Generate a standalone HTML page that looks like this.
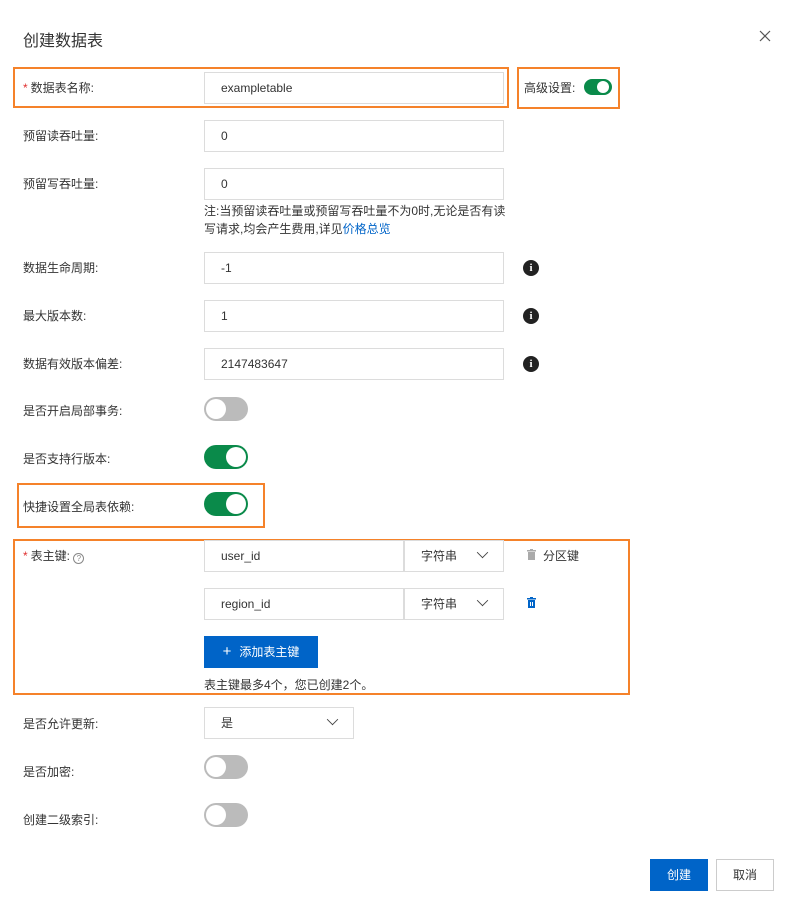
<!DOCTYPE html>
<html><head><meta charset="utf-8"><style>
*{box-sizing:border-box;margin:0;padding:0}
body{width:798px;height:914px;background:#fff;font-family:"Liberation Sans","Noto Sans CJK SC",sans-serif;color:#333;font-size:12px;position:relative;overflow:hidden}
.a{position:absolute}
.lbl{position:absolute;left:23px;font-size:12px;color:#333;line-height:16px}
.inp{position:absolute;left:204px;width:300px;height:32px;border:1px solid #dcdcdc;padding-left:16px;line-height:30px;font-size:12px;color:#333}
.tg{position:absolute;left:204px;width:44px;height:24px;border-radius:12px;background:#bbb}
.tg::after{content:"";position:absolute;top:2px;left:2px;width:20px;height:20px;border-radius:50%;background:#fff}
.tg.on{background:#0a8a4a}
.tg.on::after{left:22px}
.ob{position:absolute;border:2px solid #f5822a}
.info{position:absolute;left:523px;width:16px;height:16px;border-radius:50%;background:#222;color:#fff;font-size:11px;font-weight:bold;text-align:center;line-height:16px;font-family:"Liberation Serif",serif}
.sel{position:absolute;left:404px;width:100px;height:32px;border:1px solid #dcdcdc;padding-left:16px;line-height:30px}
.chev{position:absolute;right:16px;width:9px;height:9px;border-right:1.5px solid #444;border-bottom:1.5px solid #444;transform:rotate(45deg) scale(.9);top:7px}
.star{color:#e03030;margin-right:3px}
</style></head><body>
<div class="a" style="left:23px;top:27px;font-size:16px;color:#333">创建数据表</div>
<svg class="a" style="left:759px;top:30px" width="12" height="12"><path d="M1 1L11 11M11 1L1 11" stroke="#555" stroke-width="1.2"/></svg>

<div class="ob" style="left:13px;top:67px;width:496px;height:41px"></div>
<div class="lbl" style="top:80px"><span class="star">*</span>数据表名称:</div>
<div class="inp" style="top:72px">exampletable</div>
<div class="ob" style="left:517px;top:67px;width:103px;height:42px"></div>
<div class="a" style="left:524px;top:79px">高级设置:</div>
<div class="a" style="left:584px;top:79px;width:28px;height:16px;border-radius:8px;background:#0a8a4a"><div class="a" style="left:13px;top:2px;width:12px;height:12px;border-radius:50%;background:#fff"></div></div>

<div class="lbl" style="top:128px">预留读吞吐量:</div>
<div class="inp" style="top:120px">0</div>
<div class="lbl" style="top:176px">预留写吞吐量:</div>
<div class="inp" style="top:168px">0</div>
<div class="a" style="left:204px;top:202px;width:305px;line-height:18px">注:当预留读吞吐量或预留写吞吐量不为0时,无论是否有读写请求,均会产生费用,详见<span style="color:#0064c8">价格总览</span></div>

<div class="lbl" style="top:260px">数据生命周期:</div>
<div class="inp" style="top:252px">-1</div><div class="info" style="top:260px">i</div>
<div class="lbl" style="top:308px">最大版本数:</div>
<div class="inp" style="top:300px">1</div><div class="info" style="top:308px">i</div>
<div class="lbl" style="top:356px">数据有效版本偏差:</div>
<div class="inp" style="top:348px">2147483647</div><div class="info" style="top:356px">i</div>

<div class="lbl" style="top:403px">是否开启局部事务:</div>
<div class="tg" style="top:397px"></div>
<div class="lbl" style="top:451px">是否支持行版本:</div>
<div class="tg on" style="top:445px"></div>
<div class="ob" style="left:17px;top:483px;width:248px;height:45px"></div>
<div class="lbl" style="top:499px">快捷设置全局表依赖:</div>
<div class="tg on" style="top:492px"></div>

<div class="ob" style="left:13px;top:539px;width:617px;height:156px"></div>
<div class="lbl" style="top:548px"><span class="star">*</span>表主键: <span style="display:inline-block;width:11px;height:11px;border:1px solid #888;border-radius:50%;font-size:8px;line-height:9px;text-align:center;color:#888;vertical-align:-1px">?</span></div>
<div class="inp" style="top:540px;width:200px">user_id</div>
<div class="sel" style="top:540px">字符串<div class="chev"></div></div>
<svg class="a" style="left:527px;top:549px" width="9" height="11"><rect x="0" y="1" width="9" height="1.5" fill="#aaa"/><rect x="3" y="0" width="3" height="1.5" fill="#aaa"/><rect x="1" y="3" width="7" height="8" fill="#aaa"/></svg>
<div class="a" style="left:543px;top:547px;font-size:12px">分区键</div>
<div class="inp" style="top:588px;width:200px">region_id</div>
<div class="sel" style="top:588px">字符串<div class="chev"></div></div>
<svg class="a" style="left:527px;top:597px" width="9" height="11"><rect x="0" y="1" width="9" height="1.5" fill="#0064c8"/><rect x="3" y="0" width="3" height="1.5" fill="#0064c8"/><rect x="1" y="3" width="7" height="8" fill="#0064c8"/><rect x="3" y="5" width="1" height="4" fill="#fff"/><rect x="5" y="5" width="1" height="4" fill="#fff"/></svg>
<div class="a" style="left:204px;top:636px;width:114px;height:32px;background:#0064c8;color:#fff;line-height:32px;text-align:center;font-size:12px"><span style="font-size:15px;margin-right:8px">+</span>添加表主键</div>
<div class="a" style="left:204px;top:676px">表主键最多4个，您已创建2个。</div>

<div class="lbl" style="top:716px">是否允许更新:</div>
<div class="sel" style="top:707px;left:204px;width:150px">是<div class="chev"></div></div>
<div class="lbl" style="top:764px">是否加密:</div>
<div class="tg" style="top:755px"></div>
<div class="lbl" style="top:812px">创建二级索引:</div>
<div class="tg" style="top:803px"></div>

<div class="a" style="left:650px;top:859px;width:58px;height:32px;background:#0064c8;color:#fff;text-align:center;line-height:32px">创建</div>
<div class="a" style="left:716px;top:859px;width:58px;height:32px;border:1px solid #ccc;text-align:center;line-height:30px">取消</div>
</body></html>
